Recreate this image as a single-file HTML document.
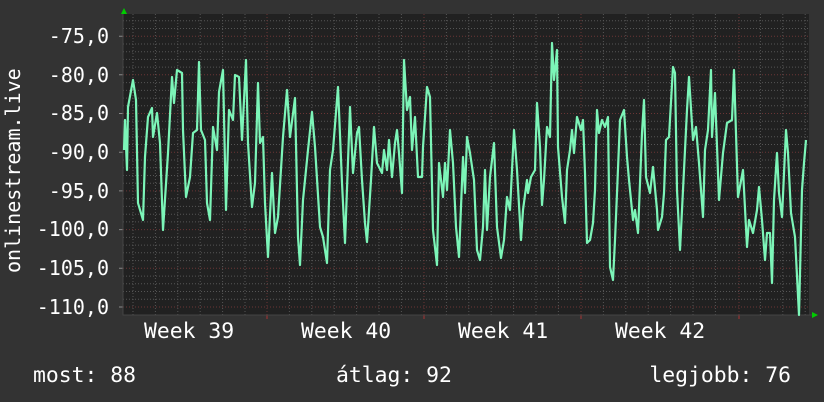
<!DOCTYPE html>
<html><head><meta charset="utf-8"><style>
html,body{margin:0;padding:0;background:#333333;}
svg{display:block}
text{font-family:"DejaVu Sans Mono","Liberation Mono",monospace;fill:#ffffff;font-size:20px;}
.b{font-size:21.4px}
</style></head><body>
<svg width="824" height="402" viewBox="0 0 824 402" xmlns="http://www.w3.org/2000/svg">
<rect width="824" height="402" fill="#333333"/>
<rect x="123" y="14" width="686" height="301" fill="#212121"/>
<g id="grid" stroke-width="1" fill="none">
<g stroke="#555" stroke-dasharray="1,2">
<path d="M123 299.3H809M123 291.5H809M123 283.8H809M123 276.1H809M123 260.6H809M123 252.8H809M123 245.1H809M123 237.4H809M123 221.9H809M123 214.2H809M123 206.4H809M123 198.7H809M123 183.2H809M123 175.5H809M123 167.7H809M123 160H809M123 144.5H809M123 136.8H809M123 129.1H809M123 121.3H809M123 105.8H809M123 98.1H809M123 90.4H809M123 82.6H809M123 67.1H809M123 59.4H809M123 51.7H809M123 44H809M123 28.5H809M123 20.7H809"/>
<path d="M133 14V315M155.4 14V315M177.8 14V315M200.2 14V315M222.6 14V315M245 14V315M289.4 14V315M311.8 14V315M334.2 14V315M356.6 14V315M379 14V315M401.4 14V315M446.4 14V315M468.8 14V315M491.2 14V315M513.6 14V315M536 14V315M558.4 14V315M603.4 14V315M625.8 14V315M648.2 14V315M670.6 14V315M693 14V315M715.4 14V315M760.4 14V315M782.8 14V315M805.2 14V315"/>
</g>
<g stroke="#6a3535" stroke-dasharray="1,2">
<path d="M123 307H809M123 268.3H809M123 229.6H809M123 190.9H809M123 152.2H809M123 113.5H809M123 74.8H809M123 36.2H809"/>
<path d="M267 14V315M424 14V315M581 14V315M739 14V315"/>
</g>
<g stroke="#888"><path d="M119 307H123M119 268.3H123M119 229.6H123M119 190.9H123M119 152.2H123M119 113.5H123M119 74.8H123M119 36.2H123"/></g>
<g stroke="#a33"><path d="M267 315V319M424 315V319M581 315V319M739 315V319"/></g>
<path d="M123 10V315H812" stroke="#444"/>
</g>
<polygon points="121,14 127,14 124,8" fill="#00cc00"/>
<polygon points="812,312 812,318 818,315" fill="#00cc00"/>
<polyline fill="none" stroke="#7cf5b8" stroke-width="2.2" stroke-linejoin="round" points="124,150 125,120 127,170 128,107 133,80 136,100 138,203 143,220 145,157 148,117 152,108 153,137 157,113 160,143 163,230 168,153 172,77 174,103 177,70 182,73 183,130 186,197 190,177 193,133 197,130 199,62 201,130 205,140 207,203 210,220 213,127 217,150 219,92 223,70 226,210 229,110 233,120 235,75 239,77 242,140 246,60 248,143 252,207 255,183 258,83 260,143 263,137 265,203 268,257 272,173 275,233 278,217 283,137 287,90 290,137 295,98 298,237 300,265 303,200 308,150 312,112 315,147 320,227 323,237 327,263 330,170 333,150 338,87 342,183 345,243 350,107 353,173 357,133 359,127 362,180 365,223 367,242 371,180 374,127 377,163 382,173 384,150 387,170 389,140 392,177 395,143 397,130 399,153 402,193 404,60 407,110 410,97 412,150 415,117 418,177 422,177 423,147 427,87 430,97 433,230 437,265 439,163 443,197 445,163 447,190 450,130 453,163 456,227 459,257 463,157 465,193 467,137 470,153 474,180 477,250 480,260 483,227 485,170 487,230 490,177 494,143 497,227 501,258 504,240 507,197 510,210 514,130 517,170 521,240 523,210 527,180 528,193 531,177 535,170 537,103 540,147 542,205 544,180 547,127 550,137 552,43 554,80 557,50 558,147 562,197 565,223 567,170 570,150 572,130 574,153 577,117 581,130 583,120 585,173 587,243 590,240 593,223 595,190 597,110 599,133 602,120 605,127 608,117 610,267 613,280 615,240 617,193 620,120 624,110 627,157 629,180 633,220 635,210 638,233 642,133 644,100 646,177 650,193 653,167 657,210 658,230 662,217 664,193 666,140 669,137 673,67 675,73 677,190 680,250 684,170 687,110 689,77 693,140 696,127 699,163 703,217 705,150 708,130 711,70 712,137 715,93 719,200 723,153 727,123 732,120 734,70 738,197 743,170 747,247 749,220 753,233 757,210 759,187 762,220 765,260 767,233 770,233 772,283 774,200 777,153 779,193 782,217 786,130 788,153 791,213 795,237 799,315 802,190 804,163 806,140"/>
<g text-anchor="end">
<text x="109" y="43">-75,0</text>
<text x="109" y="82">-80,0</text>
<text x="109" y="120">-85,0</text>
<text x="109" y="159">-90,0</text>
<text x="109" y="198">-95,0</text>
<text x="109" y="236">-100,0</text>
<text x="109" y="275">-105,0</text>
<text x="109" y="314">-110,0</text>
</g>
<text transform="translate(20,273) rotate(-90)" font-size="20.5">onlinestream.live</text>
<text class="b" x="144" y="338">Week 39</text>
<text class="b" x="301" y="338">Week 40</text>
<text class="b" x="458" y="338">Week 41</text>
<text class="b" x="615" y="338">Week 42</text>
<text class="b" x="33" y="382">most: 88</text>
<text class="b" x="336" y="382">átlag: 92</text>
<text class="b" x="791" y="382" text-anchor="end">legjobb: 76</text>
</svg>
</body></html>
